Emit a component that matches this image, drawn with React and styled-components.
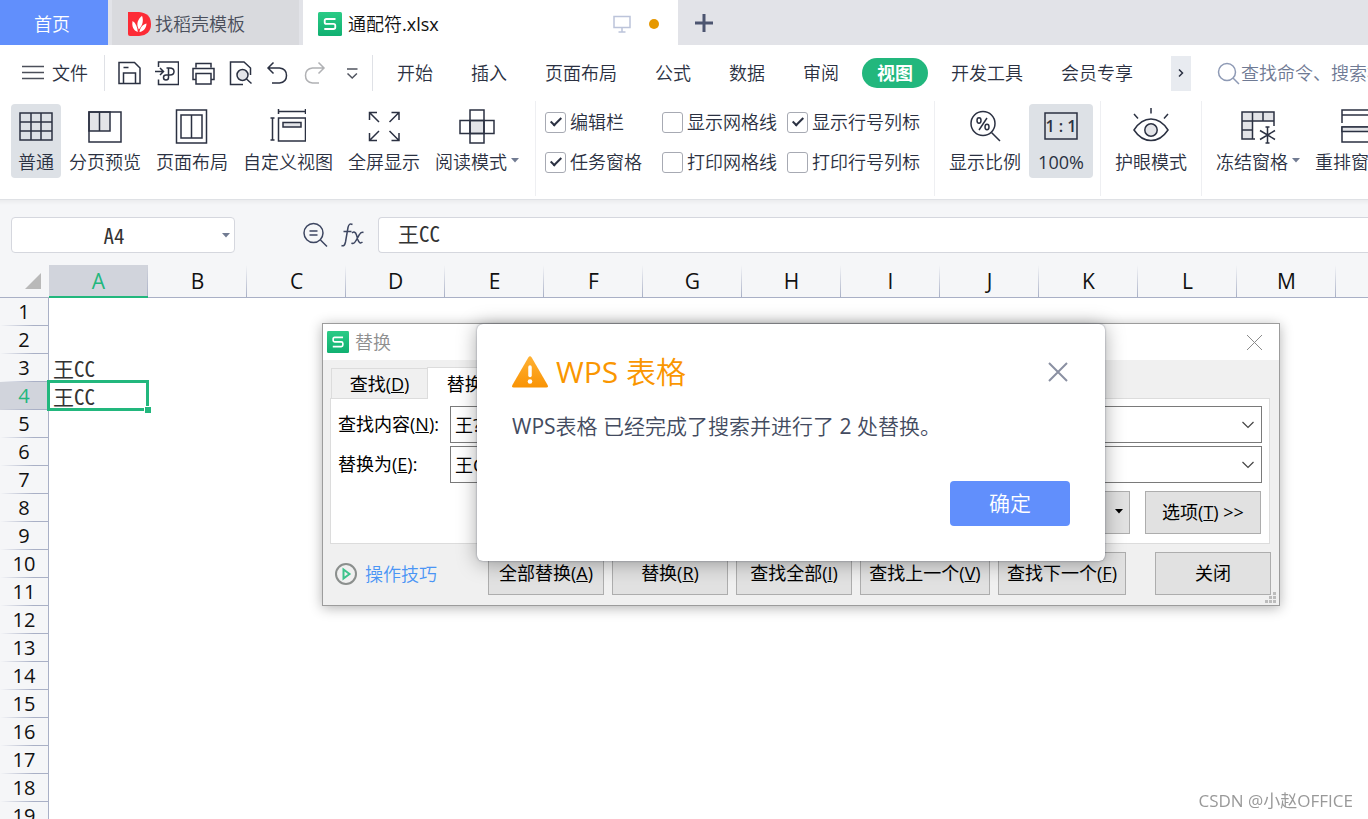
import React from "react";
import styled, { createGlobalStyle, css } from "styled-components";

const ink = "#2b3142";
const green = "#22b77d";
const blue = "#618ffc";
const shade = "#e3e4e8";
const gridLine = "#a9b0c6";

const GlobalStyle = createGlobalStyle`
  *, *::before, *::after { box-sizing: border-box; }
  body {
    margin: 0;
    background: #fff;
    color: ${ink};
    font: 350 18px/24px "Open Sans", "Noto Sans CJK SC", sans-serif;
  }
  button, input { font: inherit; color: inherit; margin: 0; padding: 0; border: 0; background: none; border-radius: 0; outline: 0; }
  svg { display: block; flex: none; }
`;

const Page = styled.div`
  display: flex;
  flex-direction: column;
  height: 100vh;
  overflow: hidden;
  white-space: nowrap;
`;

/* ---------- Title bar ---------- */
const TitleBar = styled.header`
  display: flex;
  flex: none;
  height: 45px;
  background: #e2e3e8;
`;
const HomeTab = styled.button`
  width: 108px;
  margin-right: 4px;
  background: ${blue};
  color: #fff;
  padding: 2px 4px 0 0;
`;
const DocTab = styled.button`
  display: flex;
  align-items: center;
  gap: 4px;
  width: ${(p) => p.$width}px;
  margin-right: ${(p) => (p.$active ? 0 : 4)}px;
  padding: 3px 19px 0 ${(p) => (p.$active ? 15 : 16)}px;
  background: ${(p) => (p.$active ? "#fff" : "#d9dade")};
  color: ${(p) => (p.$active ? "#111" : "#4a4f5c")};
`;
const DocName = styled.span`
  flex: 1;
  text-align: left;
  margin-left: 2px;
`;
const Dot = styled.span`
  width: 10px;
  height: 10px;
  margin-left: 14px;
  border-radius: 50%;
  background: #e69800;
`;
const AddTab = styled.button`
  width: 52px;
  display: grid;
  place-items: center;
`;

/* ---------- Menu row ---------- */
const MenuRow = styled.nav`
  display: flex;
  flex: none;
  align-items: center;
  height: 56px;
  padding-left: 22px;
  > * { flex: none; }
`;
const FileButton = styled.button`
  display: flex;
  align-items: center;
  gap: 8px;
`;
const MenuDivider = styled.span`
  width: 1px;
  height: 36px;
  margin-left: ${(p) => p.$gap}px;
  background: #dfe1e6;
`;
const QuickBar = styled.div`
  display: flex;
  gap: 13px;
  margin-left: 13px;
`;
const QuickButton = styled.button`
  width: 24px;
  height: 26px;
`;
const Tabs = styled.div`
  display: flex;
  margin-left: 5px;
`;
const MenuTab = styled.button`
  padding: 3px 19px;
  ${(p) =>
    p.$active &&
    css`
      margin: 0 4px;
      padding: 3px 15px;
      border-radius: 15px;
      background: ${green};
      color: #fff;
      font-weight: 700;
    `}
`;
const MoreTabs = styled.button`
  display: grid;
  place-items: center;
  width: 20px;
  height: 35px;
  margin-left: 19px;
  background: #e8ebf0;
`;
const Search = styled.label`
  && { flex: 1 1 0; }
  display: flex;
  align-items: center;
  min-width: 0;
  margin-left: 26px;
  overflow: hidden;
  input { flex: 1 0 240px; margin-left: 1px; }
  input::placeholder { color: #6f7a94; opacity: 1; }
`;

/* ---------- Ribbon ---------- */
const Ribbon = styled.div`
  display: flex;
  flex: none;
  height: 99px;
  padding-left: 11px;
  border-bottom: 1px solid #dfe1e5;
  overflow: hidden;
`;
const Group = styled.div`
  display: flex;
  flex: none;
  gap: 1px;
  align-items: flex-start;
  padding: 3px 7px 0 ${(p) => (p.$first ? 0 : 7)}px;
`;
const RibbonDivider = styled.span`
  flex: none;
  width: 1px;
  height: 95px;
  background: #eeeff2;
`;
const Tool = styled.button`
  display: flex;
  flex-direction: column;
  align-items: center;
  gap: 6px;
  min-width: ${(p) => p.$min || 0}px;
  height: 74px;
  padding: 4px 7px;
  border-radius: 4px;
  background: ${(p) => (p.$on ? "#dde1e6" : "transparent")};
`;
const ToolLabel = styled.span`
  display: flex;
  align-items: center;
  gap: 4px;
  font-weight: ${(p) => (p.$latin ? 400 : "inherit")};
  svg { margin-bottom: 3px; }
`;
const Checks = styled.div`
  display: grid;
  flex: none;
  grid-template-columns: 107px 115px 133px;
  gap: 16px 10px;
  align-content: start;
  padding: 9px 14px 0 9px;
  margin-left: 2px;
  border-left: 1px solid #eeeff2;
  height: 95px;
`;
const CheckLabel = styled.label`
  display: flex;
  align-items: center;
  gap: 5px;
`;
const CheckBox = styled.input`
  appearance: none;
  flex: none;
  display: grid;
  place-items: center;
  width: 21px;
  height: 21px;
  margin-right: -1px;
  border: 1px solid #a7aab3;
  border-radius: 3px;
  background: #fff;
  &:checked::before {
    content: "";
    width: 6px;
    height: 11px;
    margin-bottom: 4px;
    border: solid ${ink};
    border-width: 0 2px 2px 0;
    transform: rotate(45deg);
  }
`;

/* ---------- Formula bar ---------- */
const cellFont = css`
  font-family: "Noto Sans Mono CJK SC", "Noto Sans CJK SC", monospace;
  font-size: 21px;
`;
const FormulaBar = styled.div`
  display: flex;
  flex: none;
  align-items: center;
  height: 65px;
  padding: 5px 0 0 11px;
  background: linear-gradient(#ebecee, #f5f6f8 5px);
`;
const NameBox = styled.div`
  display: flex;
  align-items: center;
  width: 224px;
  height: 36px;
  padding-right: 4px;
  border: 1px solid #d5d7de;
  border-radius: 4px;
  background: #fff;
  input { ${cellFont} flex: 1; min-width: 0; text-align: center; padding-right: 6px; color: #333; }
`;
const FormulaInput = styled.input`
  && { ${cellFont} }
  flex: 1;
  min-width: 0;
  height: 36px;
  && { padding: 0 0 4px 19px; border: solid #d5d7de; border-width: 1px 0 1px 1px; color: #333; background: #fff; border-radius: 4px 0 0 4px; }
`;
const BarTools = styled.div`
  display: flex;
  gap: 13px;
  margin: 0 12px 0 68px;
`;
const BarButton = styled.button`
  width: 25px;
  height: 26px;
`;

/* ---------- Sheet ---------- */
const SheetArea = styled.main`
  position: relative;
  flex: 1;
  min-height: 0;
  overflow: hidden;
`;
const Sheet = styled.table`
  table-layout: fixed;
  width: 0;
  border-spacing: 0;
  td, th { padding: 0; font-weight: 400; }
  col { width: 99px; }
  col:first-child { width: 49px; }
`;
const ColHead = styled.th`
  height: 33px;
  border-bottom: 1px solid ${gridLine};
  background: linear-gradient(rgba(169, 176, 198, 0), ${gridLine}) right / 1px 100% no-repeat #f5f6f8;
  color: #111;
  font-size: 21px;
  line-height: 30px;
  ${(p) =>
    p.$on &&
    css`
      background-color: #d1d4dc;
      border-bottom: 2px solid ${green};
      color: ${green};
    `}
`;
const Corner = styled.th`
  border-bottom: 1px solid ${gridLine};
  background: #f5f6f8;
  svg { margin-left: 25px; }
`;
const RowHead = styled.th`
  height: 28px;
  border-right: 1px solid ${gridLine};
  background: linear-gradient(90deg, rgba(169, 176, 198, 0), ${gridLine} 70%) bottom / 100% 1px no-repeat
    ${(p) => (p.$on ? "#d1d4dc" : "#f5f6f8")};
  color: ${(p) => (p.$on ? green : "#111")};
  font-size: 20px;
  line-height: 26px;
`;
const Cell = styled.td`
  ${cellFont}
  position: relative;
  && { padding-left: 4px; }
  color: #333;
  line-height: 26px;
`;
const Selection = styled.span`
  position: absolute;
  inset: -2px -1px -1px -2px;
  border: 3px solid ${green};
  &::after {
    content: "";
    position: absolute;
    right: -5px;
    bottom: -5px;
    width: 7px;
    height: 7px;
    border: solid #fff;
    border-width: 1px 0 0 1px;
    background: ${green};
  }
`;

/* ---------- Replace dialog ---------- */
const Dialog = styled.section`
  position: absolute;
  left: 322px;
  top: 58px;
  width: 958px;
  border: 1px solid #9c9c9c;
  background: #f0f0f0;
  box-shadow: 0 2px 12px rgba(0, 0, 0, 0.3);
  color: #000;
  font-weight: 400;
`;
const DialogTitle = styled.div`
  display: flex;
  align-items: center;
  gap: 6px;
  height: 36px;
  padding: 0 16px 0 4px;
  background: #fff;
  color: #8f8f8f;
  font-weight: 350;
  span { flex: 1; }
`;
const DialogTabs = styled.div`
  display: flex;
  align-items: flex-end;
  height: 38px;
  padding-left: 8px;
`;
const DialogTab = styled.button`
  min-width: 97px;
  height: ${(p) => (p.$active ? 32 : 30)}px;
  padding: 0 15px;
  border: 1px solid #dcdcdc;
  border-bottom: 0;
  background: ${(p) => (p.$active ? "#fff" : "#f0f0f0")};
  ${(p) => p.$active && "position: relative; margin: 0 0 -1px -1px; padding: 0 18px;"}
`;
const Panel = styled.div`
  display: flex;
  flex-direction: column;
  height: 146px;
  margin: 0 9px 0 7px;
  padding: 7px 7px 0 7px;
  border: 1px solid #dcdcdc;
  background: #fff;
`;
const Field = styled.div`
  display: flex;
  align-items: center;
  margin-bottom: 3px;
  label { width: 112px; padding-bottom: 2px; }
`;
const Combo = styled.div`
  display: flex;
  align-items: center;
  flex: 1;
  height: 37px;
  padding: 0 6px 0 4px;
  border: 1px solid #7a7a7a;
  input { flex: 1; }
`;
const PanelActions = styled.div`
  display: flex;
  justify-content: flex-end;
  gap: 15px;
  padding: 5px 1px 0 0;
`;
const PushButton = styled.button`
  display: flex;
  align-items: center;
  justify-content: ${(p) => (p.$menu ? "flex-end" : "center")};
  width: ${(p) => p.$width}px;
  height: 43px;
  && { padding: 0 ${(p) => (p.$menu ? 5 : 0)}px 2px 0; border: 1px solid #adadad; background: #e1e1e1; }
`;
const Footer = styled.div`
  display: flex;
  align-items: center;
  gap: 8px;
  padding: 8px 8px 10px 11px;
`;
const TipsLink = styled.a`
  display: flex;
  align-items: center;
  gap: 7px;
  flex: 1;
  color: #4a95f5;
  font-weight: 350;
  text-decoration: none;
`;
const CloseSlot = styled.div`
  padding-left: 21px;
`;
const Grip = styled.span`
  position: absolute;
  right: 3px;
  bottom: 2px;
`;

/* ---------- Alert ---------- */
const Alert = styled.section`
  position: absolute;
  left: 154px;
  top: 0;
  width: 628px;
  padding: 30px 35px 35px;
  border-radius: 6px;
  background: #fff;
  box-shadow: 0 0 2px rgba(60, 66, 90, 0.6), 0 2px 20px rgba(0, 0, 0, 0.34);
  color: #434b60;
  font-size: 21px;
`;
const AlertHead = styled.div`
  display: flex;
  align-items: center;
  gap: 8px;
  h2 { flex: 1; margin: 0; font-size: 30px; line-height: 36px; font-weight: 350; color: #fa9600; }
`;
const Latin = styled.span`
  font-weight: 400;
`;
const AlertText = styled.p`
  margin: 20px 0 0;
  line-height: 32px;
  font-weight: 350;
`;
const AlertFoot = styled.div`
  display: flex;
  justify-content: flex-end;
  margin-top: 39px;
`;
const OkButton = styled.button`
  width: 120px;
  height: 45px;
  && { padding-bottom: 2px; background: ${blue}; color: #fff; border-radius: 4px; font-weight: 350; }
`;

const Watermark = styled.div`
  position: fixed;
  right: 15px;
  bottom: 6px;
  font-size: 17px;
  font-weight: 400;
  color: #999;
`;

/* ---------- Drawings ---------- */
const Icon = ({ w = 24, h = w, sw = 1.5, color = ink, children, ...rest }) => (
  <svg width={w} height={h} viewBox={`0 0 ${w} ${h}`} fill="none" stroke={color} strokeWidth={sw} aria-hidden="true" {...rest}>
    {children}
  </svg>
);
const Caret = ({ color = "#717b92", size = 8 }) => (
  <svg width={size} height="5" viewBox="0 0 8 5" aria-hidden="true"><path d="M0 0h8L4 4.5z" fill={color} /></svg>
);
const Logo = ({ size = 24 }) => (
  <svg width={size} height={size} viewBox="0 0 24 24" aria-hidden="true">
    <defs><linearGradient id="wps" x1="0" y1="0" x2="0" y2="1"><stop stopColor="#2bcb86" /><stop offset="1" stopColor="#10b071" /></linearGradient></defs>
    <rect width="24" height="24" rx="1.5" fill="url(#wps)" />
    <path d="M17.500 7H8.300Q6.700 7 6.700 8.600v1.600q0 1.700 1.600 1.700h7.200q1.800 0 1.800 1.800v1.600q0 1.700-1.800 1.700H6.300" fill="none" stroke="#fff" strokeWidth="1.8" />
  </svg>
);
const Docer = () => (
  <svg width="23" height="24" viewBox="0 0 23 24" aria-hidden="true">
    <path d="M0 0h11q12 1 12 12t-12 12H2q-2 0-2-2z" fill="#fd2b36" />
    <path d="M10.800 17.500C8 12.500 9.500 7.500 14 3.800c1.800 5 .6 9.800-3.200 13.700z" fill="#fff" />
    <path d="M9.800 20C5.500 18.500 3.500 14.500 4.600 9c3.200 2 5 6 5.200 11zM11.500 20c.6-4.500 3-7.600 7-8.600-.2 4.600-2.800 7.800-7 8.600z" fill="#fff" />
  </svg>
);
const Chevron = () => <Icon w={14} h={8} sw={1.2} color="#444"><path d="M1.500 1l5.500 5.500L12.500 1" /></Icon>;

const quick = [
  ["保存", <><path d="M1 2.500h15.500l5.500 5.500v15.500H1z" /><path d="M5.500 7.500h5M5.500 23v-10h12v10" /></>],
  ["输出为PDF", <><path d="M3.500 7V2h20v22.500h-20v-5" /><path d="M0 11.500h8M5 8l3.500 3.500L5 15M11.500 8h3q4.500 0 4.500 3.500T15 15h-4q-2.500 0-2.500 2.500t2.500 2.500 2.500-2.500V8" /></>],
  ["打印", <><path d="M4 7.500v-4h15v4M4 19.500H1v-11h21v11h-3" /><rect x="4" y="13.500" width="15" height="10.500" /></>],
  ["打印预览", <><path d="M14 24.500H1.500V2H15l6.500 6v7" /><circle cx="13.500" cy="15" r="5.500" fill={shade} /><path d="M17.500 19l5 4.500" /></>],
  ["撤销", <path d="M7.500 2.500L2 8l5.500 5.500M2 8h11.500q7 .8 7 7.500t-7 7.500H6" />],
  ["恢复", <path stroke="#b0b1b4" d="M15.500 2.500L21 8l-5.500 5.500M21 8H9.500q-7 .8-7 7.500t7 7.500H16" />],
  ["自定义", <path stroke="#50545f" d="M7 9h10.500M7.500 13.500l4.700 4.500 4.700-4.500" />],
];

const glyph = {
  normal: <path d="M2 5h32v27H2zM2 14h32M2 23h32M13 5v27M23 5v27" />,
  pageBreak: <><path d="M2 4h10.500v19H2zM12.500 4H23v19H12.500z" fill={shade} /><path d="M2 4h32v30H2z" /></>,
  layout: <path d="M2.500 2h30v33h-30zM7 7h21v23H7zM17.500 7v23" />,
  custom: <><path d="M8 3.500h28M8.500 1v5M35.500 1v5M2.500 10v22M.5 10h4M.5 32h4M8.500 10h27v23h-27z" /><path d="M13 14.500h18v4.500H13z" fill={shade} /></>,
  full: <path d="M3.500 12V4.500H11M4 5l9 9M33 12V4.500h-7.500M32.500 5l-9 9M3.500 25v7.500H11M4 32l9-9M33 25v7.500h-7.500M32.500 32l-9-9" />,
  read: <><path d="M11 12.500h14v13H11z" fill={shade} /><path d="M1 12.500h34v13H1zM11 2h14v33H11z" /></>,
  zoom: <><circle cx="16" cy="15.500" r="12" /><path d="M24.500 24.500l8.500 8.500M20 10l-8 12" /><ellipse cx="12" cy="12.500" rx="2" ry="2.700" /><ellipse cx="20" cy="19" rx="2" ry="2.700" /></>,
  actual: <><path d="M2 5h32v26H2z" /><text x="18" y="24" textAnchor="middle" fontSize="16" fontWeight="600" fill={ink} stroke="none" xmlSpace="preserve">1 : 1</text></>,
  eye: <><path d="M1 22Q8 11 18 11t17 11q-7 10.500-17 10.500T1 22z" /><circle cx="18" cy="22" r="6.200" fill={shade} /><path d="M18 0v5.500M1 6l4 4.500M35 6l-4 4.500" /></>,
  freeze: <><path d="M2 4h32v9H12.500v18H2z" fill={shade} stroke="none" /><path d="M15 31H2V4h32v14M2 13h32M12.500 4v27M23 4v9M2 22h10.500" /><path d="M27.500 19v16M25.500 19h4M25.500 35h4M20 22.500l15 9M35 22.500l-15 9" /></>,
  arrange: <><path d="M3 15V2h32v13M3 7h32M3 19h32v15H3z" /><path d="M3 19h32v4.500H3z" fill={shade} /></>,
};

const ToolItem = ({ icon, label, on, caret, min, latin }) => (
  <Tool $on={on} $min={min}>
    <Icon w={36}>{glyph[icon]}</Icon>
    <ToolLabel $latin={latin}>{label}{caret && <Caret />}</ToolLabel>
  </Tool>
);

const checks = [
  ["编辑栏", true], ["显示网格线", false], ["显示行号列标", true],
  ["任务窗格", true], ["打印网格线", false], ["打印行号列标", false],
];
const menuTabs = ["开始", "插入", "页面布局", "公式", "数据", "审阅", "视图", "开发工具", "会员专享"];
const columns = "ABCDEFGHIJKLMN".split("");
const rows = Array.from({ length: 24 }, (_, i) => i + 1);
const cells = { A3: "王CC", A4: "王CC" };

function ReplaceDialog() {
  return (
    <Dialog role="dialog" aria-label="替换">
      <DialogTitle>
        <Logo size={22} />
        <span>替换</span>
        <button aria-label="关闭对话框"><Icon w={17} sw={1} color="#8a8a8a"><path d="M1 1l15 15M16 1L1 16" /></Icon></button>
      </DialogTitle>
      <DialogTabs>
        <DialogTab>查找(<u>D</u>)</DialogTab>
        <DialogTab $active>替换(<u>P</u>)</DialogTab>
      </DialogTabs>
      <Panel>
        <Field>
          <label htmlFor="find">查找内容(<u>N</u>):</label>
          <Combo><input id="find" defaultValue="王?" /><button aria-label="展开查找内容"><Chevron /></button></Combo>
        </Field>
        <Field>
          <label htmlFor="replace">替换为(<u>E</u>):</label>
          <Combo><input id="replace" defaultValue="王CC" /><button aria-label="展开替换为"><Chevron /></button></Combo>
        </Field>
        <PanelActions>
          <PushButton $width={130} $menu aria-label="格式"><Caret color="#000" size={10} /></PushButton>
          <PushButton $width={116}><span>选项(<u>T</u>) &gt;&gt;</span></PushButton>
        </PanelActions>
      </Panel>
      <Footer>
        <TipsLink href="#tips">
          <Icon w={24} sw={2} color="#8b8f8d"><circle cx="12" cy="12" r="10" /><path d="M9.500 7.500v9l6-4.500z" stroke="#3cc48c" /></Icon>
          操作技巧
        </TipsLink>
        <PushButton $width={116}><span>全部替换(<u>A</u>)</span></PushButton>
        <PushButton $width={116}><span>替换(<u>R</u>)</span></PushButton>
        <PushButton $width={116}><span>查找全部(<u>I</u>)</span></PushButton>
        <PushButton $width={130}><span>查找上一个(<u>V</u>)</span></PushButton>
        <PushButton $width={128}><span>查找下一个(<u>F</u>)</span></PushButton>
        <CloseSlot><PushButton $width={116}>关闭</PushButton></CloseSlot>
      </Footer>
      <Grip><svg width="11" height="11" viewBox="0 0 11 11" fill="#bcbcbc"><path d="M8 0h3v3H8zM4 4h3v3H4zM8 4h3v3H8zM0 8h3v3H0zM4 8h3v3H4zM8 8h3v3H8z" /></svg></Grip>
      <Alert role="alertdialog" aria-label="WPS 表格">
        <AlertHead>
          <svg width="36" height="32" viewBox="0 0 36 32" aria-hidden="true">
            <defs><linearGradient id="warn" x1="0" y1="0" x2="0" y2="1"><stop stopColor="#ffb133" /><stop offset="1" stopColor="#f99304" /></linearGradient></defs>
            <path d="M16.300 1.500Q18-.8 19.700 1.500L35.600 29q1 2.500-1.300 2.500H1.700Q-.6 31.500.4 29z" fill="url(#warn)" />
            <path d="M18 11v8.500" stroke="#fff" strokeWidth="3.500" strokeLinecap="round" /><circle cx="18" cy="25.500" r="2.300" fill="#fff" />
          </svg>
          <h2><Latin>WPS</Latin> 表格</h2>
          <button aria-label="关闭提示"><Icon w={24} sw={2} color="#8a90a2"><path d="M3 3l18 18M21 3L3 21" /></Icon></button>
        </AlertHead>
        <AlertText><Latin>WPS</Latin>表格 已经完成了搜索并进行了 <Latin>2</Latin> 处替换。</AlertText>
        <AlertFoot><OkButton>确定</OkButton></AlertFoot>
      </Alert>
    </Dialog>
  );
}

export default function App() {
  return (
    <Page>
      <GlobalStyle />
      <TitleBar>
        <HomeTab>首页</HomeTab>
        <DocTab $width={187}><Docer /><span>找稻壳模板</span></DocTab>
        <DocTab $width={375} $active>
          <Logo />
          <DocName>通配符<Latin>.xlsx</Latin></DocName>
          <Icon w={18} h={18} color="#bcc4da"><path d="M1 1.500h16v11H1zM9 12.500V17M5.500 17h7" /></Icon>
          <Dot />
        </DocTab>
        <AddTab aria-label="新建"><Icon w={18} sw={3} color="#4c5570"><path d="M9 0v18M0 9h18" /></Icon></AddTab>
      </TitleBar>

      <MenuRow>
        <FileButton><Icon w={22} h={16} color="#4b4f5a"><path d="M0 1.500h22M0 7.500h22M0 13.500h22" /></Icon>文件</FileButton>
        <MenuDivider $gap={16} />
        <QuickBar>
          {quick.map(([name, art]) => (
            <QuickButton key={name} aria-label={name}><Icon w={24} h={26}>{art}</Icon></QuickButton>
          ))}
        </QuickBar>
        <MenuDivider $gap={8} />
        <Tabs>{menuTabs.map((t) => <MenuTab key={t} $active={t === "视图"}>{t}</MenuTab>)}</Tabs>
        <MoreTabs aria-label="更多"><Icon w={8} h={10}><path d="M2 1.500l3.500 3.500L2 8.500" /></Icon></MoreTabs>
        <Search>
          <Icon w={23} color="#8e9ab5"><circle cx="10" cy="10" r="8.500" /><path d="M16 16l6 6" /></Icon>
          <input aria-label="搜索" placeholder="查找命令、搜索模板" />
        </Search>
      </MenuRow>

      <Ribbon>
        <Group $first>
          <ToolItem icon="normal" label="普通" on />
          <ToolItem icon="pageBreak" label="分页预览" />
          <ToolItem icon="layout" label="页面布局" />
          <ToolItem icon="custom" label="自定义视图" />
          <ToolItem icon="full" label="全屏显示" />
          <ToolItem icon="read" label="阅读模式" caret />
        </Group>
        <Checks>
          {checks.map(([name, on]) => (
            <CheckLabel key={name}><CheckBox type="checkbox" defaultChecked={on} />{name}</CheckLabel>
          ))}
        </Checks>
        <RibbonDivider />
        <Group>
          <ToolItem icon="zoom" label="显示比例" />
          <ToolItem icon="actual" label="100%" on min={64} latin />
        </Group>
        <RibbonDivider />
        <Group><ToolItem icon="eye" label="护眼模式" /></Group>
        <RibbonDivider />
        <Group>
          <ToolItem icon="freeze" label="冻结窗格" caret />
          <ToolItem icon="arrange" label="重排窗口" caret />
        </Group>
      </Ribbon>

      <FormulaBar>
        <NameBox>
          <input aria-label="名称框" defaultValue="A4" />
          <button aria-label="名称列表"><Caret /></button>
        </NameBox>
        <BarTools>
          <BarButton aria-label="浏览"><Icon w={25} h={26} color="#3d4661"><circle cx="10.500" cy="11" r="9.500" /><path d="M17.500 18l6.500 6.500M6.500 9h8M6.500 13h8" /></Icon></BarButton>
          <BarButton aria-label="插入函数">
            <Icon w={25} h={26} color="#3d4661">
              <path d="M11.500 2.500Q8 .5 7 5.500L4.500 20q-1 5-4 3.500M2.500 9.500h8" />
              <path d="M11 11q3-2.500 4.500 2l1.500 5q1.500 4.500 4.500 2M22.500 10.500q-2.500-1-4 2L15 18.500q-2 4-4.500 2.500" />
            </Icon>
          </BarButton>
        </BarTools>
        <FormulaInput aria-label="编辑栏" defaultValue="王CC" />
      </FormulaBar>

      <SheetArea>
        <Sheet>
          <colgroup><col />{columns.map((c) => <col key={c} />)}</colgroup>
          <thead>
            <tr>
              <Corner><svg width="17" height="17" viewBox="0 0 17 17"><path d="M16 0v16H0z" fill="#b9b9b9" /></svg></Corner>
              {columns.map((c) => <ColHead key={c} scope="col" $on={c === "A"}>{c}</ColHead>)}
            </tr>
          </thead>
          <tbody>
            {rows.map((r) => (
              <tr key={r}>
                <RowHead scope="row" $on={r === 4}>{r}</RowHead>
                {columns.map((c) => (
                  <Cell key={c}>{cells[c + r]}{c + r === "A4" && <Selection />}</Cell>
                ))}
              </tr>
            ))}
          </tbody>
        </Sheet>
        <ReplaceDialog />
      </SheetArea>
      <Watermark>CSDN @小赵OFFICE</Watermark>
    </Page>
  );
}
